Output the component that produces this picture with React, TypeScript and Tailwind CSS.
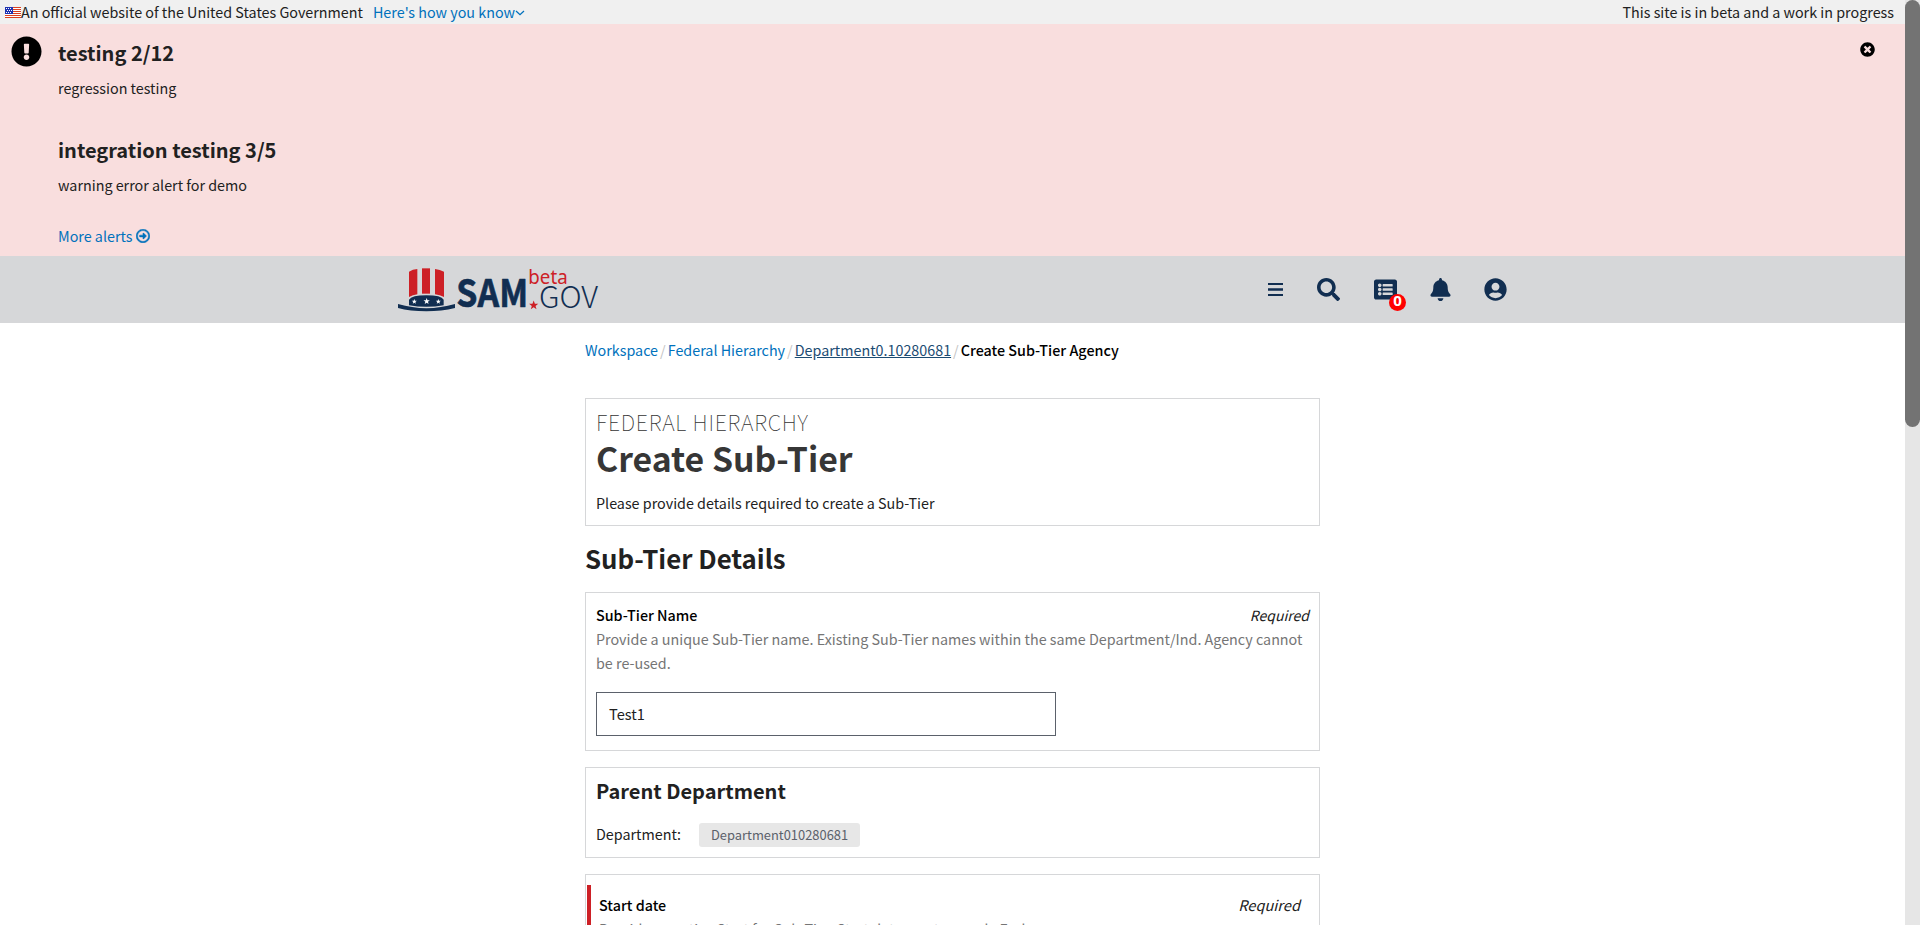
import React from "react";
import {
  FaBell,
  FaExclamationCircle,
  FaListAlt,
  FaRegArrowAltCircleRight,
  FaSearch,
  FaTimesCircle,
  FaUserCircle,
} from "react-icons/fa";

const STAR = "M0,-10 L2.5,-3.2 L9.5,-3.1 L3.9,1.2 L5.9,8.1 L0,4 L-5.9,8.1 L-3.9,1.2 L-9.5,-3.1 L-2.5,-3.2 Z";

function Flag() {
  return (
    <svg width="16" height="11" viewBox="0 0 16 11" shapeRendering="crispEdges" className="shrink-0">
      <rect width="16" height="11" fill="#fff" />
      {[0, 2, 4, 6, 8, 10].map((y) => (
        <rect key={y} y={y} width="16" height="1" fill="#db3e1f" />
      ))}
      <rect width="8" height="7" fill="#1e33b1" />
      {[1, 3, 5].map((y) =>
        [1, 3, 5].map((x) => <rect key={x + "-" + y} x={x + (y === 3 ? 1 : 0)} y={y} width="1" height="1" fill="#fff" />)
      )}
    </svg>
  );
}

function Logo() {
  return (
    <svg width="202" height="44" viewBox="54 54 606 132" className="block overflow-visible">
      <g fill="#cd2026">
        <path d="M87 65 Q98 58 112 57 V133 Q98 135 87 141 Z" />
        <path d="M126 55 H150 V131 H126 Z" />
        <path d="M165 57 Q180 59 192 65 V141 Q180 135 165 133 Z" />
      </g>
      <g fill="#112e51">
        <path d="M87 149 Q95 136 139 136 Q184 136 191 149 V166 Q139 175 87 166 Z" />
        <path d="M54 162 Q139 187 225 162 V174 Q185 184 139 184 Q90 184 54 174 Z" />
      </g>
      <g fill="#fff">
        <path d={STAR} transform="translate(103 155) scale(.8)" />
        <path d={STAR} transform="translate(140 154)" />
        <path d={STAR} transform="translate(175 155) scale(.8)" />
      </g>
      <text x="229" y="170" fontSize="115" fontWeight="700" fill="#112e51" stroke="#112e51" strokeWidth="2" strokeLinejoin="round" textLength="215" lengthAdjust="spacingAndGlyphs" className="font-['Noto_Sans_CJK_SC',sans-serif]">SAM</text>
      <path d={STAR} transform="translate(461 166) scale(1.45)" fill="#cd2026" />
      <text x="445" y="101" fontSize="60" fill="#cd2026" textLength="118" lengthAdjust="spacingAndGlyphs" className="font-['Noto_Sans',sans-serif]">beta</text>
      <text x="477" y="173" fontSize="91" fontWeight="300" fill="#112e51" textLength="177" lengthAdjust="spacingAndGlyphs" className="font-['Noto_Sans_CJK_SC',sans-serif]">GOV</text>
    </svg>
  );
}

function Scrollbar() {
  return (
    <div className="h-[925px] w-[15px] shrink-0 bg-[#e6e6e6]">
      <div className="h-[427px] rounded-full bg-[#737373]" />
    </div>
  );
}

function GovBanner() {
  return (
    <div className="flex h-6 items-center bg-[#f0f0f0] pl-[5px] pr-[11px]">
      <Flag />
      <span>An official website of the United States Government</span>
      <a className="ml-[10px] text-[#0071bc]">Here's how you know</a>
      <svg width="10" height="6" viewBox="0 0 10 6" className="mt-px" fill="none" stroke="#0071bc" strokeWidth="1.3">
        <path d="M1 1 L5 4.7 L9 1" />
      </svg>
      <span className="ml-auto">This site is in beta and a work in progress</span>
    </div>
  );
}

function Alerts() {
  return (
    <div className="flex h-[232px] bg-[#f9dede]">
      <FaExclamationCircle className="ml-[11px] mt-3 size-[31px] shrink-0 text-black" />
      <div className="ml-4 pt-[13px]">
        <h3 className="h-8 text-[20px] font-bold leading-8">testing 2/12</h3>
        <p className="mt-[7px]">regression testing</p>
        <h3 className="mt-[34px] h-8 text-[20px] font-bold leading-8">integration testing 3/5</h3>
        <p className="mt-[7px]">warning error alert for demo</p>
        <a className="mt-[27px] flex items-center gap-1 text-[#0071bc]">
          More alerts
          <FaRegArrowAltCircleRight className="size-[14px]" stroke="currentColor" strokeWidth="20" />
        </a>
      </div>
      <FaTimesCircle className="ml-auto mr-[30px] mt-[18px] size-[15px] text-black" />
    </div>
  );
}

function Header() {
  return (
    <header className="flex h-[67px] items-center bg-[#d6d7d9] px-[398px] text-[#112e51]">
      <Logo />
      <nav className="ml-auto flex items-center">
        <svg width="15" height="13" viewBox="0 0 15 13" fill="currentColor">
          <path d="M0 0h15v2H0zM0 5.3h15v2.4H0zM0 11h15v2H0z" />
        </svg>
        <FaSearch className="ml-[34px] size-[23px]" />
        <div className="relative ml-[34px]">
          <FaListAlt className="size-[23px]" />
          <span className="absolute left-[15px] top-4 flex size-[17px] items-center justify-center rounded-full bg-[#f00] font-['Noto_Sans',sans-serif] text-[15px] font-bold leading-none text-white">
            <span className="-mt-1">0</span>
          </span>
        </div>
        <FaBell className="ml-[32px] size-[23px]" />
        <FaUserCircle className="ml-[32px] size-[23px]" />
      </nav>
    </header>
  );
}

function Slash() {
  return <span className="px-[2px] text-[#c4c4c4]">/</span>;
}

function Card({ className, children }: { className: string; children: React.ReactNode }) {
  return <section className={"border border-[#d6d7d9] " + className}>{children}</section>;
}

export default function App() {
  return (
    <div className="flex h-[925px] overflow-hidden bg-white font-['Noto_Sans_CJK_SC',sans-serif] text-[14.33px] leading-6 text-[#212121]">
      <div className="min-w-0 flex-1">
        <GovBanner />
        <Alerts />
        <Header />
        <main className="mx-auto w-[735px] pt-[15px]">
          <nav className="flex">
            <a className="text-[#0071bc]">Workspace</a>
            <Slash />
            <a className="text-[#0071bc]">Federal Hierarchy</a>
            <Slash />
            <a className="text-[#1b4b72] underline">Department0.10280681</a>
            <Slash />
            <span className="font-medium text-black">Create Sub-Tier Agency</span>
          </nav>

          <Card className="mt-9 h-32 px-[10px] pt-[11px]">
            <p className="text-[21.6px] font-thin tracking-[0.75px] text-[#333]">FEDERAL HIERARCHY</p>
            <h1 className="mt-1 text-[33.8px] font-bold leading-10 text-[#363636]">Create Sub-Tier</h1>
            <p className="mt-[13px]">Please provide details required to create a Sub-Tier</p>
          </Card>

          <h2 className="mt-3 text-[25.8px] font-bold leading-10">Sub-Tier Details</h2>

          <Card className="mt-[14px] h-[159px] px-[10px] pt-[10px]">
            <div className="flex justify-between">
              <span className="font-medium text-black">Sub-Tier Name</span>
              <em className="text-[14px]">Required</em>
            </div>
            <p className="text-[#757575]">
              Provide a unique Sub-Tier name. Existing Sub-Tier names within the same Department/Ind. Agency cannot be
              re-used.
            </p>
            <div className="mt-[17px] h-11 w-[460px] border border-[#5b616b] px-3 text-[14.6px] leading-[42px]">Test1</div>
          </Card>

          <Card className="mt-4 h-[91px] px-[10px] pt-[7px]">
            <h3 className="text-[20px] font-bold leading-8">Parent Department</h3>
            <div className="mt-4 flex">
              <span className="w-[103px] leading-[22px]">Department:</span>
              <span className="h-6 rounded-[3px] bg-[#e7e7e7] px-3 text-[12.9px] leading-[23px] text-[#5b616b]">
                Department010280681
              </span>
            </div>
          </Card>

          <Card className="mt-4 h-40 pl-px pt-[10px]">
            <div className="h-40 border-l-4 border-[#cd2026] pl-2 pr-[19px] pt-2">
              <div className="flex justify-between">
                <span className="font-medium text-black">Start date</span>
                <em className="text-[14.6px]">Required</em>
              </div>
              <p className="text-[#757575]">Provide an active Start for Sub-Tier. Start date must precede End.</p>
            </div>
          </Card>
        </main>
      </div>
      <Scrollbar />
    </div>
  );
}
